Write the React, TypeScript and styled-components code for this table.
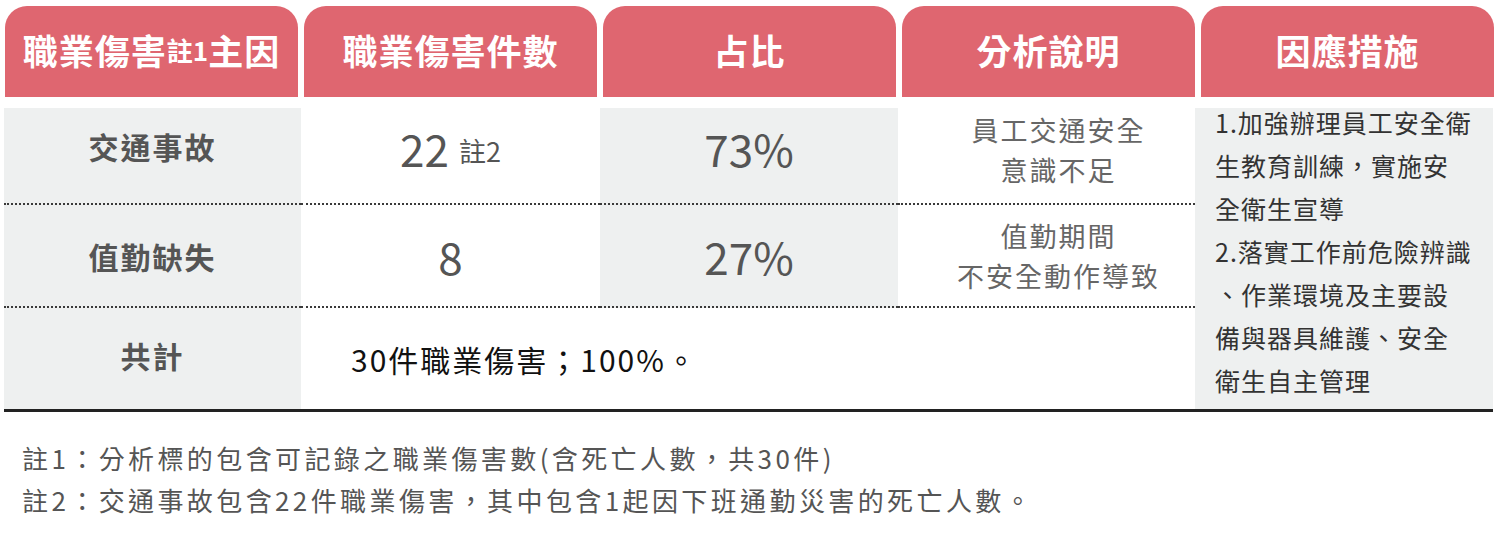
import styled, { createGlobalStyle } from "styled-components";

const GlobalStyle = createGlobalStyle`
  html, body {
    margin: 0;
    padding: 0;
    background: #ffffff;
  }
  body {
    font-family: "Noto Sans CJK TC", "Noto Sans", sans-serif;
  }
`;

const Page = styled.div`
  width: 1500px;
  padding: 6px 0 0 4px;
  box-sizing: border-box;
`;

const HeaderRow = styled.div`
  display: grid;
  grid-template-columns: repeat(5, 293px);
  gap: 6px;
  padding-left: 1px;
  margin-bottom: 11px;
`;

const Tab = styled.div`
  height: 91px;
  background: #df6670;
  border-radius: 22px 22px 0 0;
  color: #ffffff;
  font-weight: 700;
  font-size: 35px;
  letter-spacing: 1px;
  display: flex;
  align-items: center;
  justify-content: center;
  padding-bottom: 4px;
  box-sizing: border-box;
`;

const TabNote = styled.span`
  font-size: 26px;
  letter-spacing: 0;
`;

const Body = styled.div`
  display: grid;
  grid-template-columns: 297px 299px 298px 297px 298px;
  grid-template-rows: 97px 103px 101px;
  border-bottom: 3px solid #222222;
  width: 1489px;
`;

const Cell = styled.div<{ $gray?: boolean; $dotted?: boolean; $shift?: number }>`
  background: ${({ $gray }) => ($gray ? "#eef0f0" : "#ffffff")};
  border-bottom: ${({ $dotted }) => ($dotted ? "2px dotted #3a3a3a" : "none")};
  padding-bottom: ${({ $shift }) => $shift ?? 0}px;
  display: flex;
  align-items: center;
  justify-content: center;
  box-sizing: border-box;
  text-align: center;
`;

const Label = styled(Cell)`
  color: #555555;
  font-weight: 700;
  font-size: 30px;
  letter-spacing: 2px;
`;

const Number = styled(Cell)`
  color: #555555;
  font-size: 44px;
`;

const NumberNote = styled.span`
  font-size: 27px;
  margin-left: 10px;
  padding-top: 6px;
`;

const Analysis = styled(Cell)`
  color: #666666;
  font-size: 27px;
  letter-spacing: 2px;
  line-height: 40px;
  padding-left: 24px;
`;

const Total = styled(Cell)`
  grid-column: 2 / span 3;
  justify-content: flex-start;
  padding-left: 50px;
  color: #111111;
  font-size: 30px;
  letter-spacing: 2px;
`;

const Measures = styled.div`
  grid-column: 5;
  grid-row: 1 / span 3;
  background: #eef0f0;
  color: #333333;
  font-size: 25px;
  letter-spacing: 1px;
  line-height: 43px;
  padding: 0 16px 0 20px;
  box-sizing: border-box;
  text-align: left;
`;

const MeasureText = styled.div`
  margin-top: -7px;
`;

const Notes = styled.div`
  padding: 25px 0 0 18px;
  color: #555555;
  font-size: 26px;
  letter-spacing: 3.4px;
  line-height: 42px;
`;

const headers = ["職業傷害件數", "占比", "分析說明", "因應措施"];

export default function App() {
  return (
    <Page>
      <GlobalStyle />
      <HeaderRow>
        <Tab>
          職業傷害<TabNote>註1</TabNote>主因
        </Tab>
        {headers.map((h) => (
          <Tab key={h}>{h}</Tab>
        ))}
      </HeaderRow>
      <Body>
        <Label $gray $dotted $shift={20}>交通事故</Label>
        <Number $dotted $shift={16}>
          22<NumberNote>註2</NumberNote>
        </Number>
        <Number $gray $dotted $shift={16}>73%</Number>
        <Analysis $dotted $shift={12}>
          員工交通安全
          <br />
          意識不足
        </Analysis>
        <Measures>
          <MeasureText>
            1.加強辦理員工安全衛
            <br />
            生教育訓練，實施安
            <br />
            全衛生宣導
            <br />
            2.落實工作前危險辨識
            <br />
            、作業環境及主要設
            <br />
            備與器具維護、安全
            <br />
            衛生自主管理
          </MeasureText>
        </Measures>
        <Label $gray $dotted>值勤缺失</Label>
        <Number $dotted>8</Number>
        <Number $gray $dotted>27%</Number>
        <Analysis $dotted>
          值勤期間
          <br />
          不安全動作導致
        </Analysis>
        <Label $gray $shift={8}>共計</Label>
        <Total>30件職業傷害；100%。</Total>
      </Body>
      <Notes>
        註1：分析標的包含可記錄之職業傷害數(含死亡人數，共30件)
        <br />
        註2：交通事故包含22件職業傷害，其中包含1起因下班通勤災害的死亡人數。
      </Notes>
    </Page>
  );
}
